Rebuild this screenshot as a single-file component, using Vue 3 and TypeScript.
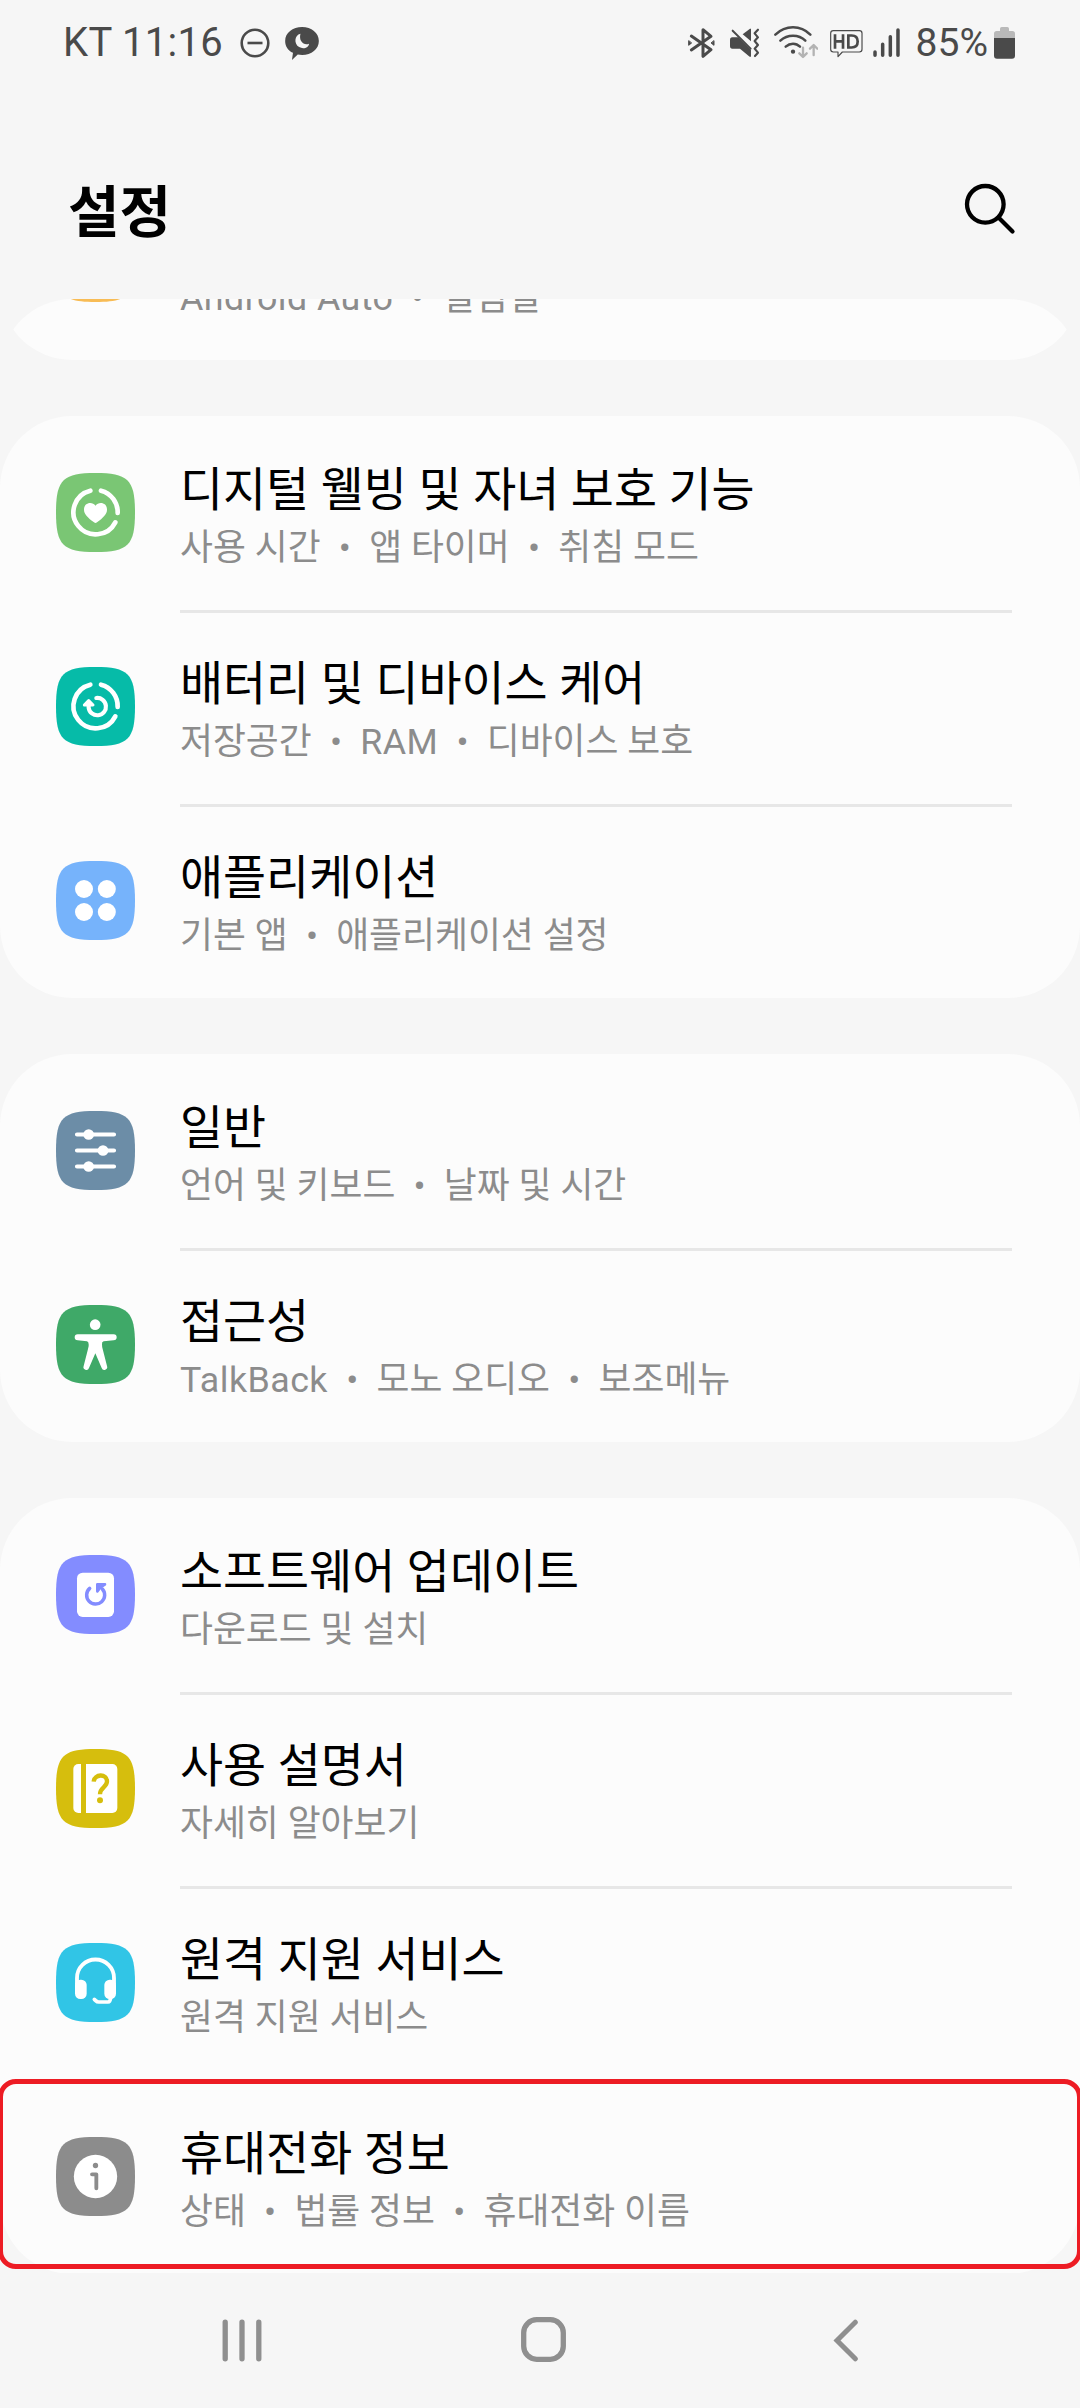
<script setup lang="ts">
type IconName =
  | 'advanced'
  | 'wellbeing'
  | 'care'
  | 'apps'
  | 'general'
  | 'accessibility'
  | 'update'
  | 'manual'
  | 'remote'
  | 'about'

interface Entry {
  icon: IconName
  color: string
  title: string
  details: string[]
  highlighted?: boolean
}

const groups: Entry[][] = [
  [{ icon: 'advanced', color: '#f8bc55', title: '유용한 기능', details: ['Android Auto', '실험실'] }],
  [
    { icon: 'wellbeing', color: '#7ac674', title: '디지털 웰빙 및 자녀 보호 기능', details: ['사용 시간', '앱 타이머', '취침 모드'] },
    { icon: 'care', color: '#06bba8', title: '배터리 및 디바이스 케어', details: ['저장공간', 'RAM', '디바이스 보호'] },
    { icon: 'apps', color: '#76b3fb', title: '애플리케이션', details: ['기본 앱', '애플리케이션 설정'] },
  ],
  [
    { icon: 'general', color: '#6c8da7', title: '일반', details: ['언어 및 키보드', '날짜 및 시간'] },
    { icon: 'accessibility', color: '#3fa968', title: '접근성', details: ['TalkBack', '모노 오디오', '보조메뉴'] },
  ],
  [
    { icon: 'update', color: '#838cff', title: '소프트웨어 업데이트', details: ['다운로드 및 설치'] },
    { icon: 'manual', color: '#d6be0d', title: '사용 설명서', details: ['자세히 알아보기'] },
    { icon: 'remote', color: '#31c5e6', title: '원격 지원 서비스', details: ['원격 지원 서비스'] },
    { icon: 'about', color: '#8c8c8c', title: '휴대전화 정보', details: ['상태', '법률 정보', '휴대전화 이름'], highlighted: true },
  ],
]

const isLatin = (text: string): boolean => /^[A-Za-z ]+$/.test(text)
</script>

<template>
  <div class="screen">
    <header class="status">
      <span class="status-text clock">KT 11:16</span>
      <svg class="dnd" viewBox="0 0 30 30"><circle cx="15" cy="15" r="13.300" /><path d="M7.500 15h15" /></svg>
      <svg class="talk" viewBox="0 0 99 97">
        <path d="M50 0C77 0 99 17 99 41S77 82 50 82q-7 0-13-1L20 97l3-21C8 69 0 56 0 41 0 17 22 0 50 0Z" fill="#4a4a4a" />
        <path d="M45 20c-18 4-20 30-4 39 14 8 29 0 29-10-14 6-31-6-25-29Z" fill="#f6f6f6" />
      </svg>
      <div class="status-right">
        <svg class="bt" viewBox="0 0 80 96" fill="none" stroke="#4a4a4a" stroke-width="9" stroke-linejoin="round" stroke-linecap="round">
          <path d="M10 27 69 68 45 88V8L69 28 10 69" />
          <path d="M2 42v13l8-6.500zM78 42v13l-8-6.500z" fill="#4a4a4a" stroke-width="3" />
        </svg>
        <svg class="mute" viewBox="0 0 88 90">
          <path d="M38 19 60 2h3v38Z" fill="#4a4a4a" />
          <path d="M7 28h18l38 37v21h-4L30 62H7q-7 0-7-8V36q0-8 7-8Z" fill="#4a4a4a" />
          <path d="m8 8 54 54" stroke="#f6f6f6" stroke-width="7" transform="translate(4 -5)" />
          <path d="m8 8 54 54" stroke="#4a4a4a" stroke-width="6" stroke-linecap="round" />
          <path d="M84 5 74 16l10 12-10 11 10 12-10 11 10 12-9 10" fill="none" stroke="#4a4a4a" stroke-width="6.500" stroke-linejoin="round" stroke-linecap="round" />
        </svg>
        <svg class="wifi" viewBox="0 0 134 100" fill="none" stroke-linecap="round">
          <g stroke="#4a4a4a" stroke-width="7.500">
            <path d="M4 26Q27 4 57 4t52 22" />
            <path d="M19 44q16-15 38-15t37 15" />
            <path d="M35 62q10-9 22-9t21 9" />
          </g>
          <circle cx="57" cy="77" r="6.500" fill="#4a4a4a" />
          <path d="M87 65v28m-11-11 11 11 11-11M119 87V58m-11 10 11-11 11 11" stroke="#b3b3b3" stroke-width="7" stroke-linejoin="round" />
        </svg>
        <svg class="hd" viewBox="0 0 98 84" fill="none" stroke="#4a4a4a">
          <path d="M10 2h78q8 0 8 8v48q0 8-8 8H37L24 80V66H10q-8 0-8-8V10q0-8 8-8Z" stroke-width="3.500" stroke-linejoin="round" />
          <path d="M15 13v43M39 13v43M15 34h24M55 16.500h10q18 0 18 18t-18 18H55Z" stroke-width="8" />
        </svg>
        <svg class="bars" viewBox="0 0 81 88" stroke="#4a4a4a" stroke-width="10.500" stroke-linecap="round">
          <path d="M6 72v10M29 49v33M52 26v56M75 6v76" />
        </svg>
        <span class="status-text">85%</span>
        <svg class="battery" viewBox="0 0 63 96">
          <path d="M18 12V5q0-5 5-5h17q5 0 5 5v7h10q8 0 8 8v14H0V20q0-8 8-8Z" fill="#b9b9b9" />
          <path d="M0 33h63v53q0 9-9 9H9q-9 0-9-9Z" fill="#4a4a4a" />
        </svg>
      </div>
    </header>

    <div class="appbar">
      <h1>설정</h1>
      <svg class="search" viewBox="0 0 52 52" fill="none" stroke="#000" stroke-width="4.300" stroke-linecap="round">
        <circle cx="21.300" cy="21.300" r="18.300" />
        <path d="m34.500 34.500 14 14" />
      </svg>
    </div>

    <main class="viewport">
      <section v-for="(group, g) in groups" :key="g" class="card">
        <div v-for="entry in group" :key="entry.title" class="row" :class="{ highlighted: entry.highlighted }">
          <svg class="icon" viewBox="0 0 237 237" fill="#fff">
            <path
              :fill="entry.color"
              d="M118.500 0C216.500 0 237 20.500 237 118.500S216.500 237 118.500 237 0 216.500 0 118.500 20.500 0 118.500 0Z"
            />
            <g v-if="entry.icon === 'wellbeing' || entry.icon === 'care'" fill="none" stroke="#fff" stroke-width="14" stroke-linecap="round">
              <path d="M103 53A66.500 66.500 0 1 0 178 148" />
              <path d="M135 53A66.500 66.500 0 0 1 185 120" />
            </g>
            <path
              v-if="entry.icon === 'wellbeing'"
              d="M118.500 98C109 85 84 88 84 110c0 14 12 24 30 38q4.500 4 9 0c18-14 30-24 30-38 0-22-25-25-34.500-12Z"
            />
            <template v-else-if="entry.icon === 'care'">
              <path d="M121 93A26 26 0 1 1 98 122V108" fill="none" stroke="#fff" stroke-width="12.500" stroke-linecap="round" />
              <path d="m98 101 13 13H85Z" stroke="#fff" stroke-width="9" stroke-linejoin="round" />
            </template>
            <template v-else-if="entry.icon === 'apps'">
              <circle cx="84" cy="84" r="27" /><circle cx="152.500" cy="84" r="27" />
              <circle cx="84" cy="153" r="27" /><circle cx="152.500" cy="153" r="27" />
            </template>
            <template v-else-if="entry.icon === 'general'">
              <path d="M63 70.500h111M63 118.500h111M63 166.500h111" stroke="#fff" stroke-width="12.500" stroke-linecap="round" />
              <circle cx="98" cy="70.500" r="16" /><circle cx="141" cy="118.500" r="16" /><circle cx="98" cy="166.500" r="16" />
            </template>
            <template v-else-if="entry.icon === 'accessibility'">
              <circle cx="117.500" cy="59" r="16" />
              <path
                d="M65 88h108a9 9 0 0 1 0 18l-30 3q-6 1-5 9 0 8 2 14l13 51a8.500 8.500 0 0 1-16 6l-19-44-19 44a8.500 8.500 0 0 1-16-6l13-51q3-8 2-14 0-8-5-9l-28-3a9 9 0 0 1 0-18Z"
              />
            </template>
            <template v-else-if="entry.icon === 'update'">
              <rect x="63" y="53" width="111" height="133" rx="17" />
              <path d="M101 100A27 27 0 1 0 139 102" fill="none" :stroke="entry.color" stroke-width="10.500" stroke-linecap="round" />
              <path d="M124 88h23l-10 7-6 5-7 9Z" :fill="entry.color" :stroke="entry.color" stroke-width="8" stroke-linejoin="round" />
            </template>
            <template v-else-if="entry.icon === 'manual'">
              <rect x="52" y="45" width="132" height="147" rx="15" />
              <path d="M75 44h15v149H75Z" :fill="entry.color" />
              <path d="M113 98c2-24 40-25 40-1 0 19-21 18-21 39" fill="none" :stroke="entry.color" stroke-width="13" />
              <circle cx="132" cy="154" r="9" :fill="entry.color" />
            </template>
            <template v-else-if="entry.icon === 'remote'">
              <path d="M63 125v-20a55.500 55.500 0 0 1 111 0v20" fill="none" stroke="#fff" stroke-width="11.500" />
              <rect x="57" y="110" width="35" height="58" rx="16" />
              <rect x="145" y="110" width="35" height="58" rx="16" />
              <path d="m115 169 4 4q4 4 9 4h28q7 0 8-14" fill="none" stroke="#fff" stroke-width="11" stroke-linecap="round" />
            </template>
            <template v-else-if="entry.icon === 'about'">
              <circle cx="118.500" cy="118.500" r="65" />
              <circle cx="118.500" cy="85.500" r="8" :fill="entry.color" />
              <path d="M108 112h13v42" fill="none" :stroke="entry.color" stroke-width="11.500" stroke-linecap="round" stroke-linejoin="round" />
            </template>
          </svg>
          <div class="text">
            <div class="title">{{ entry.title }}</div>
            <div class="details">
              <template v-for="(detail, d) in entry.details" :key="detail">
                <span v-if="d > 0" class="bullet">•</span><span :class="{ latin: isLatin(detail) }">{{ detail }}</span>
              </template>
            </div>
          </div>
        </div>
      </section>
    </main>

    <nav class="navbar">
      <svg class="recents" viewBox="0 0 40 43" stroke="#8f8f8f" stroke-width="5.300" stroke-linecap="round">
        <path d="M3.200 3.200v36.600M20 3.200v36.600M36.800 3.200v36.600" />
      </svg>
      <svg class="home" viewBox="0 0 45 45" fill="none" stroke="#8f8f8f" stroke-width="5.300">
        <rect x="2.700" y="2.700" width="39.600" height="39.600" rx="13" />
      </svg>
      <svg class="back" viewBox="0 0 26 43" fill="none" stroke="#8f8f8f" stroke-width="5" stroke-linecap="round">
        <path d="M22.300 3.200 4 21.500l18.300 18.300" />
      </svg>
    </nav>
  </div>
</template>

<style>
body {
  margin: 0;
  background: #f6f6f6;
}
</style>

<style scoped>
.screen {
  width: 1080px;
  height: 2408px;
  display: flex;
  flex-direction: column;
  overflow: hidden;
  background: #f6f6f6;
  font-family: Roboto, 'Noto Sans CJK KR', sans-serif;
}
svg {
  display: block;
  flex: none;
}
.status {
  box-sizing: border-box;
  height: 86px;
  padding: 0 65px 0 63px;
  display: flex;
  align-items: center;
  color: #4a4a4a;
}
.status-text {
  font-size: 39px;
  line-height: 46px;
  white-space: pre;
}
.clock {
  width: 162px;
  font-size: 40px;
  letter-spacing: 0.3px;
}
.dnd {
  width: 30px;
  height: 30px;
  margin-left: 14.500px;
  fill: none;
  stroke: #4a4a4a;
  stroke-width: 2.6;
}
.talk {
  width: 34px;
  height: 33px;
  margin-left: 15px;
}
.status-right {
  margin-left: auto;
  display: flex;
  align-items: center;
}
.bt {
  width: 26.700px;
  height: 32px;
}
.mute {
  width: 29.300px;
  height: 30px;
  margin-left: 15.500px;
}
.wifi {
  width: 44.700px;
  height: 33.300px;
  margin-left: 14px;
}
.hd {
  width: 32.700px;
  height: 28px;
  margin: 1px 0 0 12px;
}
.bars {
  width: 27px;
  height: 29.300px;
  margin: 0 15.500px 0 10px;
}
.battery {
  width: 21px;
  height: 32px;
  margin-left: 6px;
}
.appbar {
  box-sizing: border-box;
  height: 213px;
  padding: 87px 64px 0 68px;
  display: flex;
  justify-content: space-between;
  align-items: flex-start;
}
h1 {
  margin: 0;
  font-size: 56px;
  line-height: 80px;
  font-weight: 700;
}
.search {
  width: 52px;
  height: 52px;
  margin-top: 10px;
}
.viewport {
  height: 1974px;
  flex: none;
  overflow: hidden;
  border-radius: 72px 72px 0 0;
}
.card {
  border-radius: 72px;
  margin-bottom: 56px;
  background: #fcfcfc;
}
.card:first-child {
  margin-top: -133px;
}
.card:last-child {
  margin-bottom: 0;
}
.row {
  position: relative;
  box-sizing: border-box;
  height: 194px;
  padding: 0 68px 0 56px;
  display: flex;
}
.icon {
  width: 79px;
  height: 79px;
  margin: 57px 45px 0 0;
}
.text {
  flex: 1;
  box-sizing: border-box;
  padding-top: 44px;
  white-space: nowrap;
}
.row + .row .text {
  border-top: 3px solid #e7e7e7;
  padding-top: 41px;
}
.title {
  font-size: 46.800px;
  line-height: 60px;
  color: #000;
}
.details {
  display: flex;
  margin-top: 5px;
  font-size: 35.800px;
  line-height: 46px;
  color: #8c8c8c;
}
.bullet {
  width: 48.500px;
  text-align: center;
}
.latin {
  letter-spacing: 0.45px;
}
.highlighted::after {
  content: '';
  position: absolute;
  left: -2px;
  right: -2px;
  top: -1px;
  height: 180px;
  border: 5px solid #ed1c24;
  border-radius: 18px;
}
.navbar {
  flex: 1;
  display: grid;
  grid-template-columns: 222px 299px 312px 1fr;
  padding-top: 44px;
}
.recents {
  grid-column: 2;
  width: 40px;
  height: 43px;
  margin-top: 2px;
}
.home {
  width: 45px;
  height: 45px;
}
.back {
  width: 26px;
  height: 43px;
  margin-top: 2px;
}
</style>
